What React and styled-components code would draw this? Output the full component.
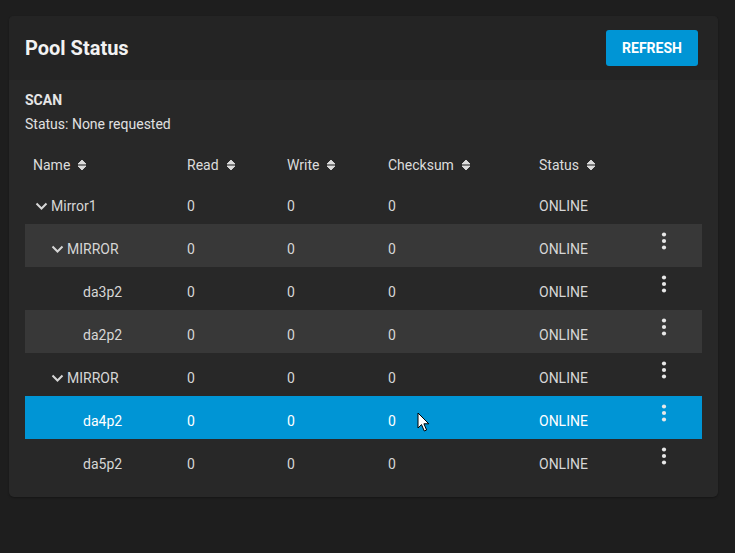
import React from "react"
import styled, { createGlobalStyle } from "styled-components"

const GlobalStyle = createGlobalStyle`
  html, body {
    margin: 0;
    padding: 0;
    background: #1e1e1e;
    font-family: Roboto, "Liberation Sans", sans-serif;
  }
`

const columns = ["Name", "Read", "Write", "Checksum", "Status"]

const rows = [
  { name: "Mirror1", level: 0, group: true, actions: false },
  { name: "MIRROR", level: 1, group: true, actions: true },
  { name: "da3p2", level: 2, actions: true },
  { name: "da2p2", level: 2, actions: true },
  { name: "MIRROR", level: 1, group: true, actions: true },
  { name: "da4p2", level: 2, actions: true, selected: true },
  { name: "da5p2", level: 2, actions: true },
]

const SortIcon = () => (
  <svg width="10" height="12" viewBox="0 0 10 12">
    <path d="M1 5 L5 1 L9 5 Z" fill="currentColor" strokeLinejoin="round" stroke="currentColor" strokeWidth="0.9" />
    <path d="M1 7 L5 11 L9 7 Z" fill="currentColor" strokeLinejoin="round" stroke="currentColor" strokeWidth="0.9" />
  </svg>
)

const Chevron = () => (
  <svg width="18" height="18" viewBox="0 0 18 18">
    <polyline points="3.5,6.5 8.5,11.5 13.5,6.5" fill="none" stroke="currentColor" strokeWidth="2" />
  </svg>
)

const MoreVert = () => (
  <svg width="24" height="24" viewBox="0 0 24 24">
    <circle cx="12" cy="5.5" r="2.1" fill="currentColor" />
    <circle cx="12" cy="12" r="2.1" fill="currentColor" />
    <circle cx="12" cy="18.5" r="2.1" fill="currentColor" />
  </svg>
)

const Cursor = () => (
  <svg width="14" height="21" viewBox="0 0 14 21">
    <path
      d="M1 1 L1 16 L4.5 12.6 L7.3 19 L9.6 18 L6.9 11.8 L11.8 11.8 Z"
      fill="#fff"
      stroke="#000"
      strokeWidth="1"
      strokeLinejoin="round"
    />
  </svg>
)

const PoolStatus = () => (
  <Card>
    <CardHeader>
      <Title>Pool Status</Title>
      <RefreshButton>Refresh</RefreshButton>
    </CardHeader>
    <CardBody>
      <ScanLabel>SCAN</ScanLabel>
      <ScanStatus>Status: None requested</ScanStatus>
      <Table>
        <HeaderRow>
          {columns.map(col => (
            <HeaderCell key={col}>
              {col}
              <SortIcon />
            </HeaderCell>
          ))}
          <HeaderCell />
        </HeaderRow>
        {rows.map((row, i) => (
          <Row key={i} $striped={i % 2 === 1} $selected={row.selected}>
            <NameCell $level={row.level}>
              <ChevronSlot>{row.group && <Chevron />}</ChevronSlot>
              {row.name}
            </NameCell>
            <Cell>0</Cell>
            <Cell>0</Cell>
            <Cell>0</Cell>
            <Cell>ONLINE</Cell>
            <ActionCell>{row.actions && <MoreVert />}</ActionCell>
          </Row>
        ))}
      </Table>
    </CardBody>
  </Card>
)

export default function App() {
  return (
    <>
      <GlobalStyle />
      <Page>
        <PoolStatus />
        <CursorLayer>
          <Cursor />
        </CursorLayer>
      </Page>
    </>
  )
}

const Page = styled.div`
  position: relative;
  width: 735px;
  height: 553px;
  padding: 16px 0 0 9px;
  box-sizing: border-box;
  overflow: hidden;
`

const CursorLayer = styled.div`
  position: absolute;
  left: 417px;
  top: 412px;
  line-height: 0;
`

const Card = styled.section`
  width: 709px;
  height: 481px;
  border-radius: 5px;
  background: #282828;
  overflow: hidden;
  box-shadow: 0 1px 2px rgba(0, 0, 0, 0.3);
`

const CardHeader = styled.header`
  height: 64px;
  display: flex;
  align-items: center;
  justify-content: space-between;
  padding: 0 20px 0 16px;
  background: #242424;
`

const Title = styled.h2`
  margin: 0;
  font-size: 20px;
  font-weight: 700;
  color: #f2f2f2;
`

const RefreshButton = styled.button`
  width: 92px;
  height: 36px;
  border: none;
  border-radius: 3px;
  background: #0095d5;
  color: #fff;
  font-family: inherit;
  font-size: 14px;
  font-weight: 700;
  text-transform: uppercase;
  cursor: pointer;
`

const CardBody = styled.div`
  padding: 12px 16px 0 16px;
  display: flex;
  flex-direction: column;
`

const ScanLabel = styled.div`
  font-size: 14px;
  font-weight: 700;
  line-height: 16px;
  color: #e6e6e6;
`

const ScanStatus = styled.div`
  margin-top: 8px;
  font-size: 14px;
  line-height: 16px;
  color: #e0e0e0;
`

const Table = styled.div`
  margin-top: 13px;
  display: flex;
  flex-direction: column;
`

const gridCols = "154px 100px 101px 151px 95px 76px"

const HeaderRow = styled.div`
  display: grid;
  grid-template-columns: ${gridCols};
  height: 36px;
  padding-top: 4px;
  box-sizing: border-box;
  align-items: center;
`

const HeaderCell = styled.div`
  display: flex;
  align-items: center;
  gap: 7px;
  padding-left: 8px;
  font-size: 14px;
  color: #dcdcdc;
`

const Row = styled.div`
  display: grid;
  grid-template-columns: ${gridCols};
  height: 43px;
  padding-top: 6px;
  box-sizing: border-box;
  align-items: center;
  background: ${p => (p.$selected ? "#0095d5" : p.$striped ? "#383838" : "transparent")};
  color: ${p => (p.$selected ? "#ffffff" : "#d6d6d6")};
  font-size: 14px;
`

const Cell = styled.div`
  padding-left: 8px;
`

const NameCell = styled.div`
  display: flex;
  align-items: center;
  padding-left: ${p => 8 + p.$level * 16}px;
`

const ChevronSlot = styled.span`
  width: 18px;
  height: 18px;
  display: inline-flex;
  align-items: center;
`

const ActionCell = styled.div`
  align-self: start;
  margin-top: -1px;
  display: flex;
  justify-content: center;
  color: #e8e8e8;
`
